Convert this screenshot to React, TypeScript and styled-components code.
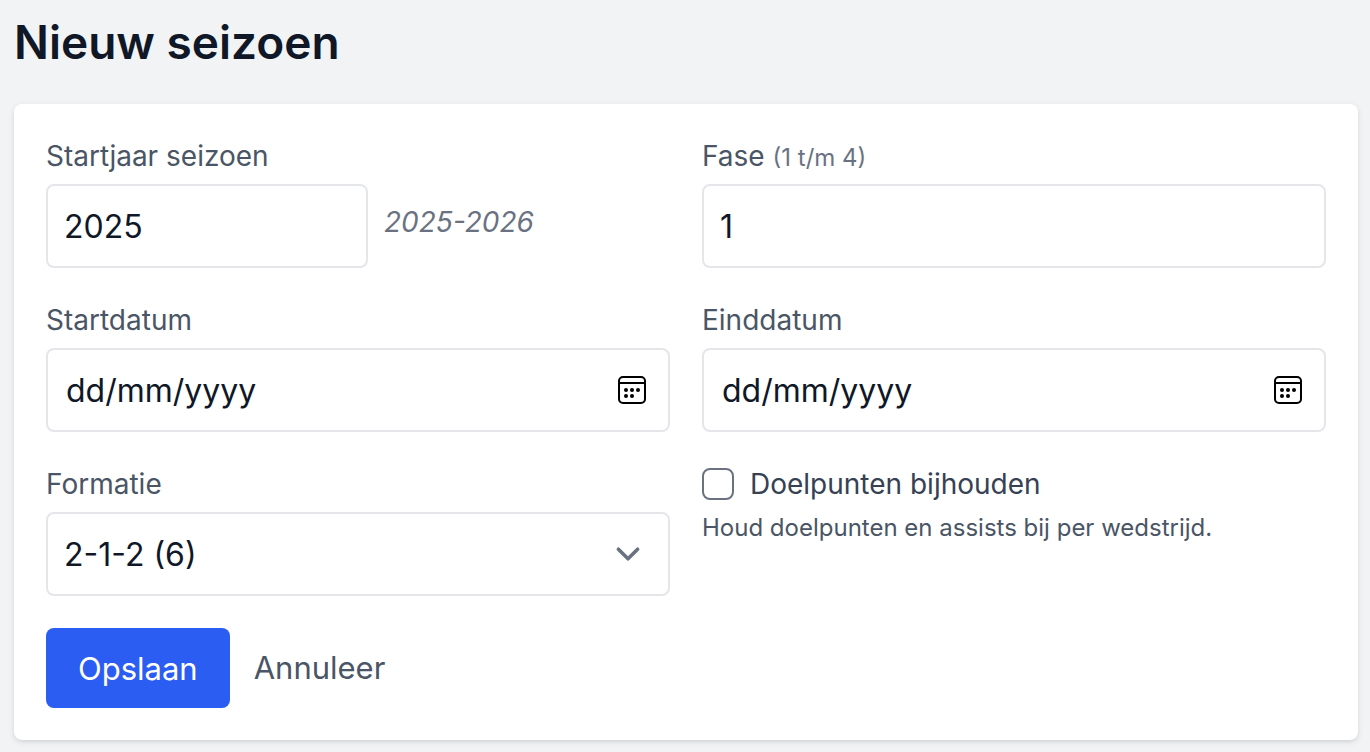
import React, { useState } from "react";
import styled, { createGlobalStyle } from "styled-components";

const GlobalStyle = createGlobalStyle`
  *, *::before, *::after { box-sizing: border-box; }
  body {
    margin: 0;
    background: #f2f3f5;
    color: #101828;
    font-family: Inter, "Liberation Sans", sans-serif;
  }
`;

const Page = styled.main`
  padding: 10px 12px 12px 14px;
`;

const Title = styled.h1`
  margin: 0 0 30px;
  font-size: 46px;
  line-height: 64px;
  font-weight: 600;
`;

const Card = styled.form`
  display: flex;
  flex-direction: column;
  gap: 32px;
  padding: 32px;
  background: #fff;
  border-radius: 8px;
  box-shadow: 0 2px 6px rgba(0, 0, 0, 0.1), 0 2px 4px -2px rgba(0, 0, 0, 0.1);
`;

const Fields = styled.div`
  display: grid;
  grid-template-columns: repeat(2, minmax(0, 1fr));
  gap: 32px;
`;

const Field = styled.div`
  display: flex;
  flex-direction: column;
  gap: 8px;
`;

const Label = styled.label`
  font-size: 28px;
  line-height: 40px;
  color: #4a5565;
`;

const Range = styled.span`
  font-size: 24px;
  line-height: 24px;
  color: #6a7282;
`;

const Control = styled.div`
  position: relative;
  display: flex;
  align-items: flex-start;
  gap: 16px;
`;

const Input = styled.input<{ $width?: string; $date?: boolean }>`
  width: ${(p) => p.$width ?? "100%"};
  height: 84px;
  margin: 0;
  padding: 0 ${(p) => (p.$date ? 18 : 16)}px;
  border: 2px solid #e5e6ea;
  border-radius: 8px;
  background: #fff;
  color: #101828;
  font: inherit;
  font-size: 32px;
  &::placeholder { color: #101828; opacity: 1; }
`;

const Select = styled.select`
  appearance: none;
  width: 100%;
  height: 84px;
  margin: 0;
  padding: 0 64px 0 16px;
  border: 2px solid #e5e6ea;
  border-radius: 8px;
  background: #fff;
  color: #101828;
  font: inherit;
  font-size: 32px;
`;

const Chevron = styled.svg`
  position: absolute;
  right: 18px;
  top: 18px;
  width: 48px;
  height: 48px;
  pointer-events: none;
`;

const PickerButton = styled.button`
  position: absolute;
  right: 22px;
  top: 26px;
  width: 32px;
  height: 32px;
  padding: 0;
  border: 0;
  background: none;
  cursor: pointer;
  svg { display: block; }
`;

const Season = styled.em`
  font-size: 28px;
  line-height: 76px;
  color: #6a7282;
`;

const CheckLabel = styled.label`
  display: flex;
  align-items: center;
  gap: 16px;
  font-size: 28px;
  line-height: 40px;
  color: #364153;
`;

const Checkbox = styled.input`
  appearance: none;
  width: 32px;
  height: 32px;
  margin: 0;
  border: 2px solid #6a7282;
  border-radius: 8px;
  background: #fff;
  &:checked { background: #2b5df3; border-color: #2b5df3; }
`;

const Hint = styled.p`
  margin: 0;
  font-size: 24px;
  line-height: 32px;
  color: #4a5565;
`;

const Actions = styled.div`
  display: flex;
  align-items: center;
  gap: 24px;
`;

const Submit = styled.button`
  height: 80px;
  padding: 0 32px;
  border: 0;
  border-radius: 8px;
  background: #2b5df3;
  color: #fff;
  font: inherit;
  font-size: 31px;
  cursor: pointer;
`;

const Cancel = styled.a`
  font-size: 31px;
  line-height: 48px;
  color: #4a5565;
  text-decoration: none;
`;

function CalendarIcon() {
  return (
    <svg width="32" height="32" viewBox="0 0 32 32" aria-hidden="true">
      <rect x="3" y="3" width="26" height="26" rx="4" fill="none" stroke="#000" strokeWidth="2" />
      <path d="M3 9h26" stroke="#000" strokeWidth="2" />
      {[[10, 16], [16, 16], [22, 16], [10, 22], [16, 22]].map(([x, y]) => (
        <circle key={`${x}-${y}`} cx={x} cy={y} r="2" />
      ))}
    </svg>
  );
}

function DateField({ id, label }: { id: string; label: string }) {
  return (
    <Field>
      <Label htmlFor={id}>{label}</Label>
      <Control>
        <Input id={id} type="text" inputMode="numeric" placeholder="dd/mm/yyyy" $date />
        <PickerButton type="button" aria-label={`Kies ${label.toLowerCase()}`}>
          <CalendarIcon />
        </PickerButton>
      </Control>
    </Field>
  );
}

export default function App() {
  const [year, setYear] = useState("2025");
  const start = Number(year);

  return (
    <>
      <GlobalStyle />
      <Page>
        <Title>Nieuw seizoen</Title>
        <Card onSubmit={(e: React.FormEvent) => e.preventDefault()}>
          <Fields>
            <Field>
              <Label htmlFor="year">Startjaar seizoen</Label>
              <Control>
                <Input
                  id="year"
                  inputMode="numeric"
                  $width="322px"
                  value={year}
                  onChange={(e) => setYear(e.target.value)}
                />
                <Season>{`${start}-${start + 1}`}</Season>
              </Control>
            </Field>
            <Field>
              <Label htmlFor="phase">
                Fase <Range>(1 t/m 4)</Range>
              </Label>
              <Input id="phase" inputMode="numeric" defaultValue="1" />
            </Field>
            <DateField id="start" label="Startdatum" />
            <DateField id="end" label="Einddatum" />
            <Field>
              <Label htmlFor="formation">Formatie</Label>
              <Control>
                <Select id="formation" defaultValue="6">
                  <option value="6">2-1-2 (6)</option>
                </Select>
                <Chevron viewBox="0 0 20 20" fill="none" aria-hidden="true">
                  <path
                    d="M6 8l4 4 4-4"
                    stroke="#6a7282"
                    strokeWidth="1.5"
                    strokeLinecap="round"
                    strokeLinejoin="round"
                  />
                </Chevron>
              </Control>
            </Field>
            <Field>
              <CheckLabel>
                <Checkbox type="checkbox" aria-describedby="goals-hint" />
                Doelpunten bijhouden
              </CheckLabel>
              <Hint id="goals-hint">Houd doelpunten en assists bij per wedstrijd.</Hint>
            </Field>
          </Fields>
          <Actions>
            <Submit type="submit">Opslaan</Submit>
            <Cancel href="#">Annuleer</Cancel>
          </Actions>
        </Card>
      </Page>
    </>
  );
}
